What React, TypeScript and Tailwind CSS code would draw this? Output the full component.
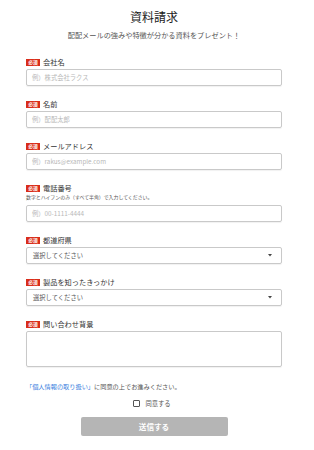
const font = { fontFamily: '"Noto Sans CJK JP", "Noto Sans", sans-serif' };

type Field = {
  label: string;
  kind: "input" | "select" | "textarea";
  placeholder?: string;
  hint?: string;
};

const fields: Field[] = [
  { label: "会社名", kind: "input", placeholder: "例）株式会社ラクス" },
  { label: "名前", kind: "input", placeholder: "例）配配太郎" },
  { label: "メールアドレス", kind: "input", placeholder: "例）rakus@example.com" },
  {
    label: "電話番号",
    kind: "input",
    placeholder: "例）00-1111-4444",
    hint: "数字とハイフンのみ（すべて半角）で入力してください。",
  },
  { label: "都道府県", kind: "select" },
  { label: "製品を知ったきっかけ", kind: "select" },
  { label: "問い合わせ背景", kind: "textarea" },
];

function Required() {
  return (
    <span className="mr-[3px] inline-flex h-[7px] w-[14px] items-center justify-center bg-[#d92d1a] text-[4.8px] font-bold leading-none text-white">
      必須
    </span>
  );
}

function FieldRow({ f }: { f: Field }) {
  return (
    <div className="flex flex-col">
      <div className="flex h-[10px] items-center text-[7.2px] text-[#333]">
        <Required />
        {f.label}
      </div>
      {f.hint && (
        <div className="mt-[1px] h-[6px] text-[4.9px] leading-[6px] text-[#555]">{f.hint}</div>
      )}
      {f.kind === "input" && (
        <div
          className={`flex h-[17px] items-center rounded-[2px] border border-[#c9c9c9] px-[5px] text-[6.3px] text-[#b8b8b8] shadow-[0_1px_1px_rgba(0,0,0,0.06)] ${
            f.hint ? "mt-[5px]" : "mt-[2px]"
          }`}
        >
          {f.placeholder}
        </div>
      )}
      {f.kind === "select" && (
        <div className="mt-[2px] flex h-[17px] items-center justify-between rounded-[2px] border border-[#c9c9c9] pl-[6px] pr-[9px] text-[6.3px] text-[#555] shadow-[0_1px_1px_rgba(0,0,0,0.06)]">
          <span>選択してください</span>
          <svg width="4" height="3" viewBox="0 0 4 3">
            <path d="M0 0 H4 L2 2.5 Z" fill="#444" />
          </svg>
        </div>
      )}
      {f.kind === "textarea" && (
        <div className="mt-[2px] h-[36px] rounded-[2px] border border-[#c9c9c9] shadow-[0_1px_1px_rgba(0,0,0,0.06)]" />
      )}
    </div>
  );
}

export default function App() {
  return (
    <div className="min-h-[450px] w-[314px] bg-white pl-[26px] pr-[32px]" style={font}>
      <h1 className="pt-[8px] text-center text-[12px] font-normal leading-[18px] text-[#222]">
        資料請求
      </h1>
      <p className="mt-[4px] text-center text-[7.2px] leading-[10px] text-[#555]">
        配配メールの強みや特徴が分かる資料をプレゼント！
      </p>
      <div className="mt-[17px] flex flex-col gap-[13px]">
        {fields.map((f) => (
          <FieldRow key={f.label} f={f} />
        ))}
      </div>
      <p className="mt-[16px] text-[6.2px] leading-[8px] text-[#555]">
        <span className="text-[#3d7fe0]">「個人情報の取り扱い」</span>に同意の上でお進みください。
      </p>
      <div className="mt-[8px] flex items-center justify-center gap-[5px] pr-[4px]">
        <span className="h-[7px] w-[7px] rounded-[1px] border border-[#555]" />
        <span className="text-[6.3px] text-[#555]">同意する</span>
      </div>
      <div className="mt-[9px] flex justify-center">
        <div className="flex h-[19px] w-[147px] items-center justify-center rounded-[2px] bg-[#b5b5b5] text-[7.6px] font-bold text-white">
          送信する
        </div>
      </div>
    </div>
  );
}
